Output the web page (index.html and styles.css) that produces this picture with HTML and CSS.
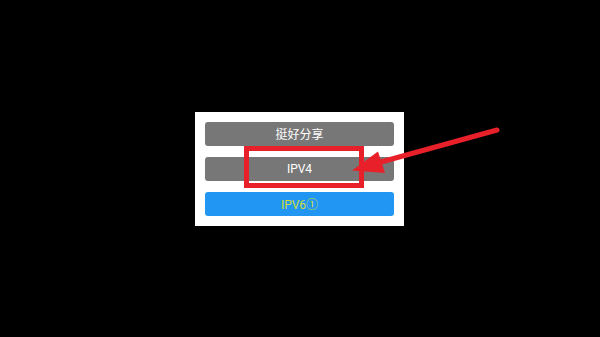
FILE: index.html
```html
<!DOCTYPE html>
<html lang="zh">
<head>
<meta charset="utf-8">
<link rel="stylesheet" href="styles.css">
</head>
<body>
<div class="stage">
  <div class="card">
    <div class="btn gray">挺好分享</div>
    <div class="btn gray">IPV4</div>
    <div class="btn blue">IPV6①</div>
  </div>
  <svg class="annot" width="600" height="337" viewBox="0 0 600 337">
    <rect x="246.5" y="148.5" width="115" height="37" fill="none" stroke="#e8202a" stroke-width="5"/>
    <line x1="497" y1="130" x2="372" y2="164.5" stroke="#e8202a" stroke-width="5" stroke-linecap="round"/>
    <polygon points="352,170.5 378,151.5 385,173" fill="#e8202a"/>
  </svg>
</div>
</body>
</html>
```
FILE: styles.css
```css
html, body {
  margin: 0;
  padding: 0;
  background: #000;
}
.stage {
  position: relative;
  width: 600px;
  height: 337px;
  display: flex;
  align-items: center;
  justify-content: center;
}
.card {
  width: 189px;
  padding: 10px;
  background: #fff;
  display: flex;
  flex-direction: column;
  gap: 11px;
  margin-left: -1px;
}
.btn {
  height: 24px;
  border-radius: 3px;
  display: flex;
  align-items: center;
  justify-content: center;
  font-family: Roboto, "Noto Sans CJK SC", sans-serif;
  font-size: 12px;
  color: #fff;
}
.gray {
  background: #777777;
}
.blue {
  background: #2196f3;
  color: #cddc39;
}
.annot {
  position: absolute;
  left: 0;
  top: 0;
}
```
